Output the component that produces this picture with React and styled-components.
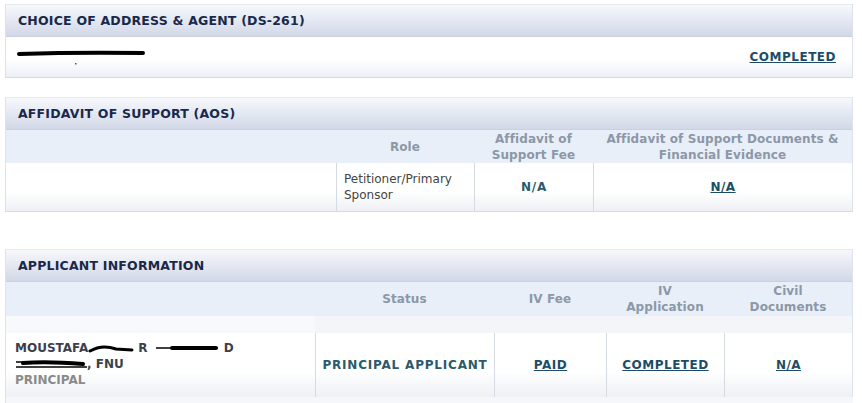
import React from 'react';
import styled, { createGlobalStyle } from 'styled-components';

const Global = createGlobalStyle`
  body {
    margin: 0;
    background: #fff;
    font-family: "DejaVu Sans", Verdana, sans-serif;
  }
`;

const Page = styled.div`
  display: flex;
  flex-flow: column nowrap;
  padding: 4px 9px 0 5px;
  width: 848px;
`;

const Panel = styled.section`
  border: 1px solid #dde1ea;
  border-top-color: #e6e9f0;
  border-bottom-color: #d5dae4;
  margin-top: ${(p) => p.$gap || 0}px;
`;

const Header = styled.div`
  height: 31px;
  display: flex;
  align-items: center;
  padding-left: 12px;
  background: linear-gradient(#f7f8fc, #d2d8e8);
  border-bottom: 1px solid #c9d0e0;
  color: #1a284a;
  font-size: 12.5px;
  font-weight: bold;
  letter-spacing: 0.2px;
`;

const Grid = styled.div`
  display: grid;
  grid-template-columns: ${(p) => p.$cols};
`;

const HeadCell = styled.div`
  height: ${(p) => p.$h || 33}px;
  background: #e9eff8;
  display: flex;
  align-items: center;
  justify-content: center;
  text-align: center;
  color: #8c97a8;
  font-size: 12px;
  font-weight: bold;
  line-height: 16px;
  letter-spacing: 0.1px;
`;

const Spacer = styled.div`
  height: 17px;
  background: ${(p) => (p.$light ? '#f8f9fc' : '#f3f5f9')};
`;

const Cell = styled.div`
  height: ${(p) => p.$h}px;
  display: flex;
  align-items: center;
  justify-content: ${(p) => (p.$left ? 'flex-start' : 'center')};
  padding: 0 ${(p) => (p.$left ? 7 : 0)}px;
  background: linear-gradient(#fff 60%, #eef0f5);
  border-left: ${(p) => (p.$line ? '1px solid #d6dbe3' : 'none')};
  font-size: 12px;
  color: #444;
  line-height: 16px;
`;

const Body = styled.div`
  height: 40px;
  display: flex;
  align-items: center;
  justify-content: space-between;
  padding: 0 16px 0 11px;
  background: linear-gradient(#fff 55%, #eceff5);
`;

const Link = styled.a`
  color: #1d4d66;
  font-weight: bold;
  font-size: 12px;
  text-decoration: underline;
  letter-spacing: 0.5px;
`;

const Strong = styled.span`
  color: #2a5a6c;
  font-weight: bold;
  font-size: 12px;
  letter-spacing: 0.8px;
`;

const Name = styled.div`
  display: flex;
  flex-flow: column nowrap;
  padding-left: 2px;
  font-weight: bold;
  font-size: 12px;
  line-height: 16px;
  color: #3b3f4c;
  margin-top: -3px;
`;

const Role = styled.span`
  color: #8a8a8a;
`;

const Redact = styled.svg`
  display: inline-block;
  vertical-align: middle;
`;

const Tail = styled.div`
  height: 7px;
  background: #f6f7fa;
  border-left: 1px solid #dde1ea;
  margin-top: -1px;
`;

export default function App() {
  return (
    <>
      <Global />
      <Page>
        <Panel>
          <Header>CHOICE OF ADDRESS &amp; AGENT (DS-261)</Header>
          <Body>
            <Redact width="130" height="16" viewBox="0 0 130 16">
              <path d="M2 5 Q60 3 126 4" stroke="#000" strokeWidth="4" strokeLinecap="round" fill="none" />
              <rect x="58" y="14" width="1.5" height="1.5" fill="#555" />
            </Redact>
            <Link href="#">COMPLETED</Link>
          </Body>
        </Panel>

        <Panel $gap={19}>
          <Header>AFFIDAVIT OF SUPPORT (AOS)</Header>
          <Grid $cols="330px 138px 119px 1fr">
            <HeadCell />
            <HeadCell>Role</HeadCell>
            <HeadCell>Affidavit of<br />Support Fee</HeadCell>
            <HeadCell>Affidavit of Support Documents &amp;<br />Financial Evidence</HeadCell>
            <Cell $h={48} />
            <Cell $h={48} $line $left>Petitioner/Primary<br />Sponsor</Cell>
            <Cell $h={48} $line><Strong>N/A</Strong></Cell>
            <Cell $h={48} $line><Link href="#">N/A</Link></Cell>
          </Grid>
        </Panel>

        <Panel $gap={37}>
          <Header>APPLICANT INFORMATION</Header>
          <Grid $cols="309px 179px 112px 118px 1fr">
            <HeadCell $h={34} />
            <HeadCell $h={34}>Status</HeadCell>
            <HeadCell $h={34}>IV Fee</HeadCell>
            <HeadCell $h={34}>IV<br />Application</HeadCell>
            <HeadCell $h={34}>Civil<br />Documents</HeadCell>
            <Spacer $light />
            <Spacer />
            <Spacer />
            <Spacer />
            <Spacer />
            <Cell $h={64} $left>
              <Name>
                <span>
                  MOUSTAFA
                  <Redact width="50" height="10" viewBox="0 0 50 10">
                    <path d="M2 8 Q14 1 28 6 L44 7" stroke="#000" strokeWidth="3" strokeLinecap="round" fill="none" />
                  </Redact>
                  R{'  '}
                  <Redact width="72" height="10" viewBox="0 0 72 10">
                    <path d="M4 5 L66 5" stroke="#000" strokeWidth="1.5" fill="none" />
                    <path d="M20 5 L64 5" stroke="#000" strokeWidth="4" strokeLinecap="round" fill="none" />
                  </Redact>
                  D
                </span>
                <span>
                  <Redact width="72" height="10" viewBox="0 0 72 10">
                    <path d="M1 3 L14 3 M1 8 L72 8" stroke="#000" strokeWidth="1.5" fill="none" />
                    <path d="M8 4 Q32 2 68 5" stroke="#000" strokeWidth="4" strokeLinecap="round" fill="none" />
                  </Redact>
                  , FNU
                </span>
                <Role>PRINCIPAL</Role>
              </Name>
            </Cell>
            <Cell $h={64} $line><Strong>PRINCIPAL APPLICANT</Strong></Cell>
            <Cell $h={64} $line><Link href="#">PAID</Link></Cell>
            <Cell $h={64} $line><Link href="#">COMPLETED</Link></Cell>
            <Cell $h={64} $line><Link href="#">N/A</Link></Cell>
          </Grid>
        </Panel>
        <Tail />
      </Page>
    </>
  );
}
